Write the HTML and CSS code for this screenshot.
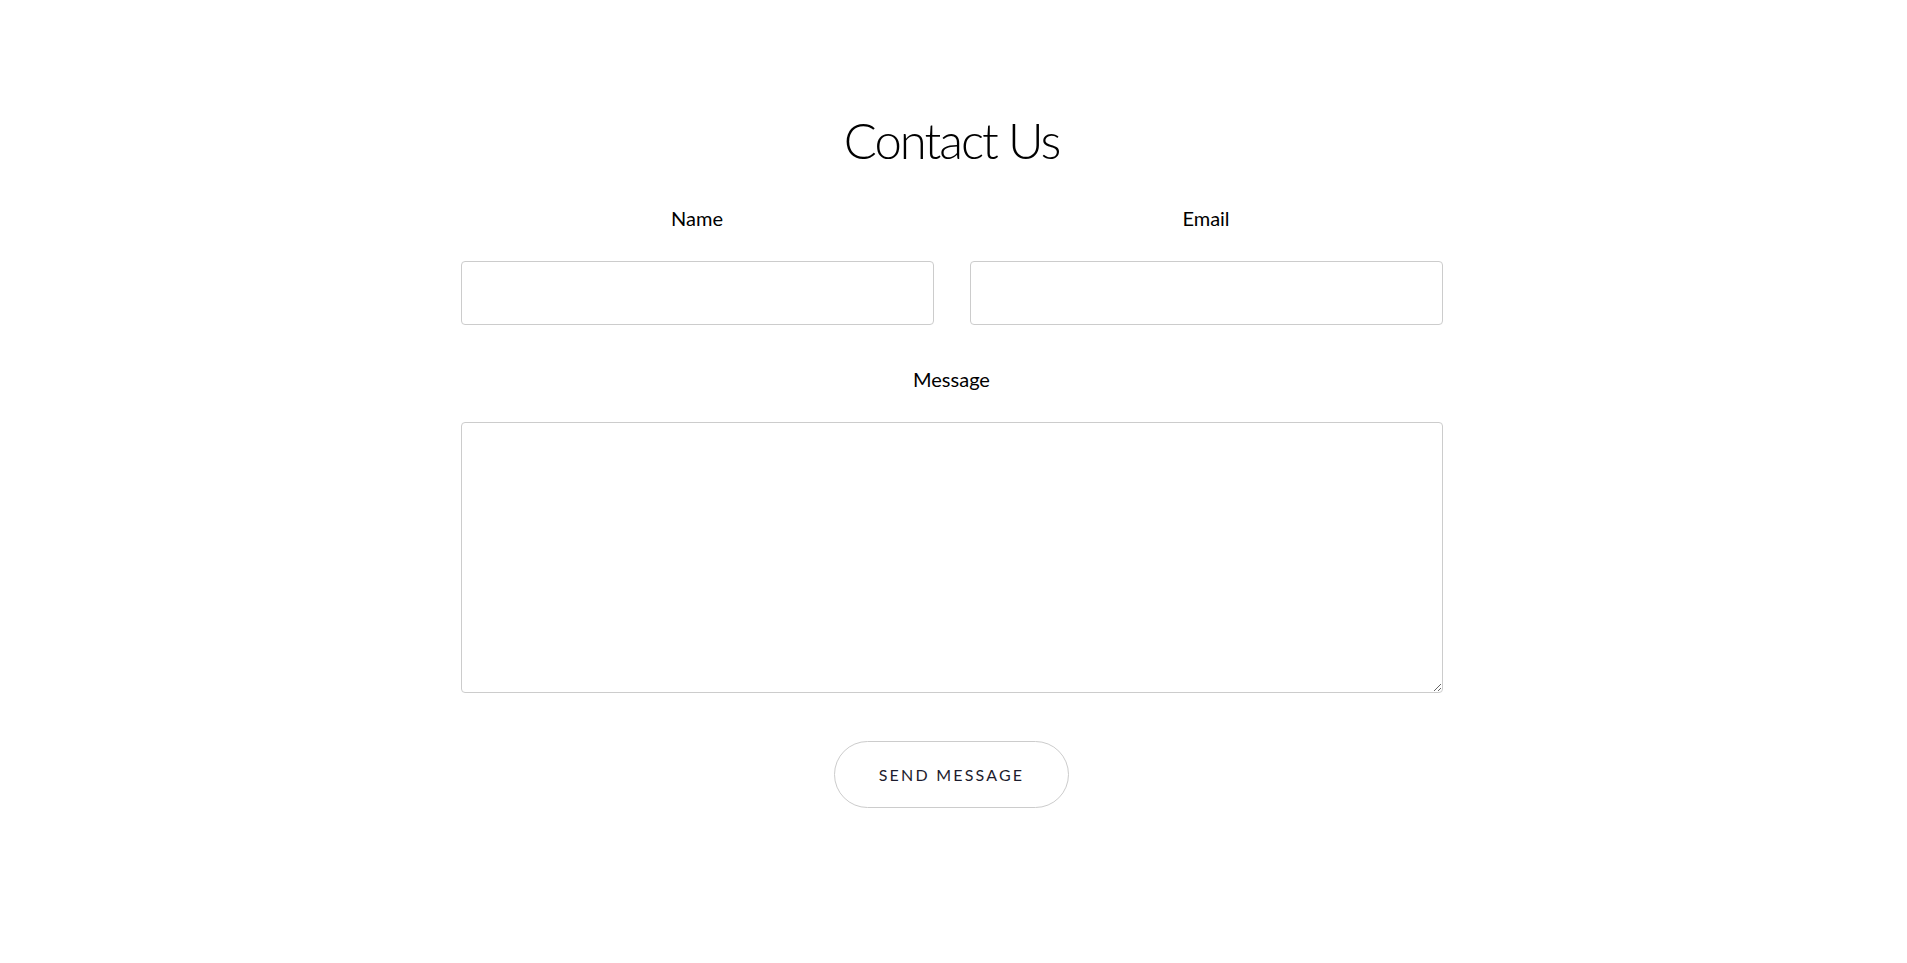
FILE: index.html
```html
<!DOCTYPE html>
<html>

<head>
  <title>Contact Us</title>
  <link rel="stylesheet" href="styles.css">
</head>

<body>
  <section class="contact">
    <h1 class="contact-title">Contact Us</h1>
    <form class="contact-form" action="#" method="post">
      <div class="field-row">
        <div class="field">
          <label class="field-label" for="name">Name</label>
          <input id="name" class="field-input" type="text" autocomplete="off">
        </div>
        <div class="field">
          <label class="field-label" for="email">Email</label>
          <input id="email" class="field-input" type="email" autocomplete="off">
        </div>
      </div>
      <div class="field field-message">
        <label class="field-label" for="message">Message</label>
        <textarea id="message" class="field-input field-textarea"></textarea>
      </div>
      <div class="actions">
        <button class="send-button" type="submit">Send Message</button>
      </div>
    </form>
  </section>
</body>

</html>
```

FILE: styles.css
```css
body {
  margin: 0;
  padding-right: 4px;
  background-color: #ffffff;
  color: #000000;
  font-family: Lato, "Open Sans", Arial, sans-serif;
}

.contact {
  padding-top: 110px;
  padding-bottom: 120px;
}

.contact-title {
  margin: 0;
  text-align: center;
  font-size: 49px;
  line-height: 60px;
  font-weight: 300;
  letter-spacing: -2px;
}

.contact-form {
  width: 982px;
  margin: 37px auto 0;
}

.field-row {
  display: grid;
  grid-template-columns: 1fr 1fr;
  gap: 36px;
}

.field {
  display: flex;
  flex-direction: column;
}

.field-label {
  text-align: center;
  font-size: 20px;
  line-height: 23px;
  margin-bottom: 31px;
}

.field-input {
  box-sizing: border-box;
  height: 64px;
  margin: 0;
  padding: 10px 14px;
  border: 1px solid #cccccc;
  border-radius: 4px;
  font-family: inherit;
  font-size: 16px;
  outline: none;
  background: #ffffff;
}

.field-message {
  margin-top: 43px;
}

.field-textarea {
  height: 271px;
  resize: vertical;
}

.actions {
  display: flex;
  justify-content: center;
  margin-top: 48px;
}

.send-button {
  width: 235px;
  height: 67px;
  border: 1px solid #cccccc;
  border-radius: 34px;
  background: #ffffff;
  color: #1c1c2e;
  font-family: inherit;
  font-size: 16px;
  letter-spacing: 2.2px;
  text-transform: uppercase;
  cursor: pointer;
}
```
